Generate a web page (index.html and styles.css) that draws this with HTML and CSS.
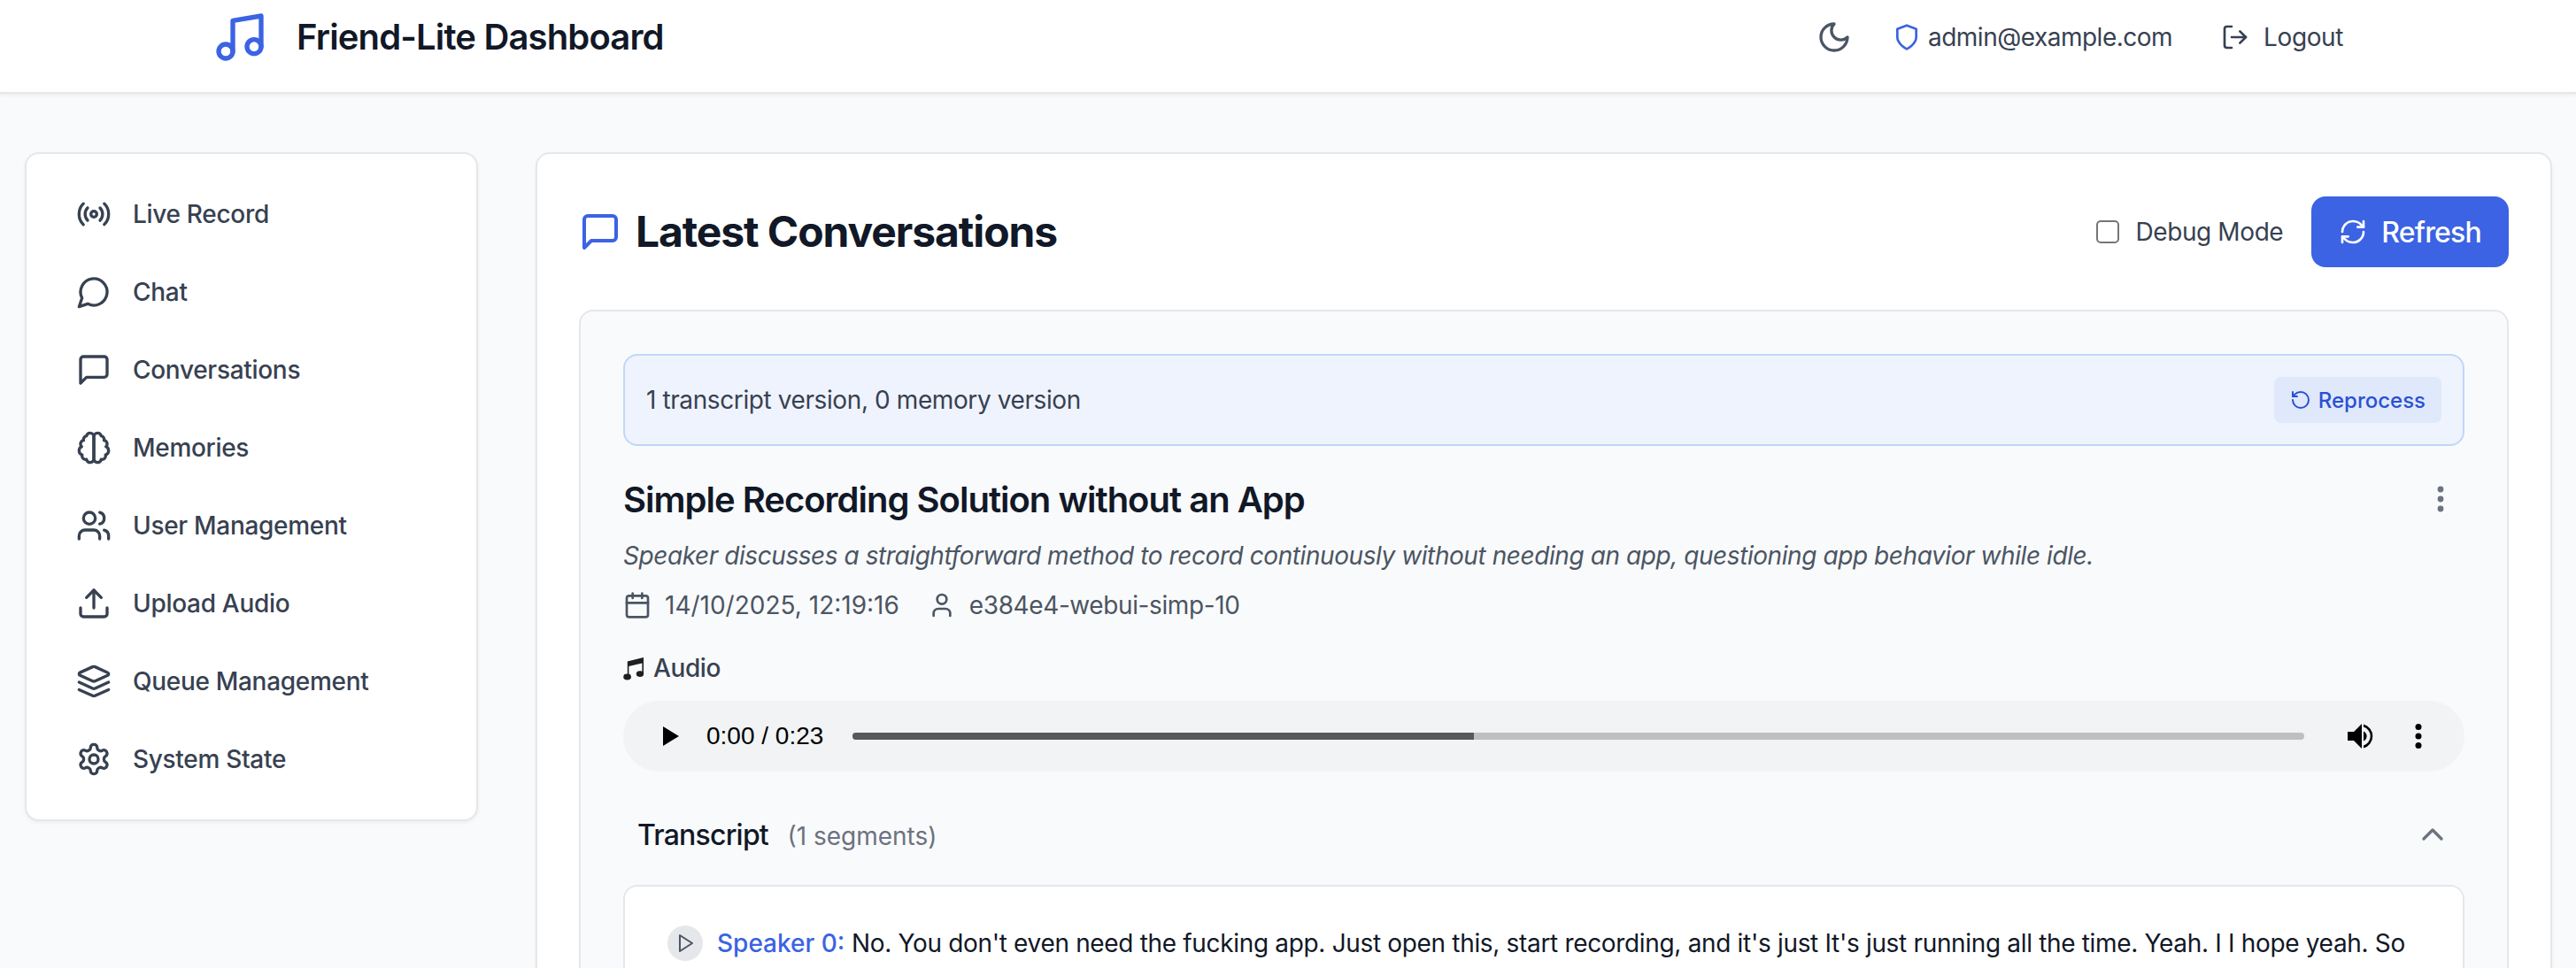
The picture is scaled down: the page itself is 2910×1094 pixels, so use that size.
FILE: index.html
```html
<!DOCTYPE html>
<html lang="en">

<head>
    <meta charset="utf-8">
    <title>Friend-Lite Dashboard</title>
    <link rel="stylesheet" href="styles.css">
</head>

<body>
    <header class="topbar">
        <div class="topbar-inner">
            <div class="brand">
                <svg class="icon icon-brand" viewBox="0 0 24 24"><path d="M9 18V5l12-2v13"/><circle cx="6" cy="18" r="3"/><circle cx="18" cy="16" r="3"/></svg>
                <span class="brand-name">Friend-Lite Dashboard</span>
            </div>
            <div class="topbar-actions">
                <svg class="icon icon-moon" viewBox="0 0 24 24"><path d="M12 3a6 6 0 0 0 9 9 9 9 0 1 1-9-9Z"/></svg>
                <div class="account">
                    <svg class="icon icon-shield" viewBox="0 0 24 24"><path d="M12 22s8-4 8-10V5l-8-3-8 3v7c0 6 8 10 8 10"/></svg>
                    <span>admin@example.com</span>
                </div>
                <div class="logout">
                    <svg class="icon icon-logout" viewBox="0 0 24 24"><path d="M9 21H5a2 2 0 0 1-2-2V5a2 2 0 0 1 2-2h4"/><polyline points="16 17 21 12 16 7"/><line x1="21" x2="9" y1="12" y2="12"/></svg>
                    <span>Logout</span>
                </div>
            </div>
        </div>
    </header>

    <div class="layout">
        <nav class="sidebar">
            <a class="nav-item">
                <svg class="icon" viewBox="0 0 24 24"><path d="M4.9 19.1C1 15.2 1 8.8 4.9 4.9"/><path d="M7.8 16.2c-2.3-2.3-2.3-6.1 0-8.5"/><circle cx="12" cy="12" r="2"/><path d="M16.2 7.8c2.3 2.3 2.3 6.1 0 8.5"/><path d="M19.1 4.9C23 8.8 23 15.1 19.1 19"/></svg>
                <span>Live Record</span>
            </a>
            <a class="nav-item">
                <svg class="icon" viewBox="0 0 24 24"><path d="M7.9 20A9 9 0 1 0 4 16.1L2 22Z"/></svg>
                <span>Chat</span>
            </a>
            <a class="nav-item">
                <svg class="icon" viewBox="0 0 24 24"><path d="M21 15a2 2 0 0 1-2 2H7l-4 4V5a2 2 0 0 1 2-2h14a2 2 0 0 1 2 2z"/></svg>
                <span>Conversations</span>
            </a>
            <a class="nav-item">
                <svg class="icon" viewBox="0 0 24 24"><path d="M9.5 2A2.5 2.5 0 0 1 12 4.5v15a2.5 2.5 0 0 1-4.96.44 2.5 2.5 0 0 1-2.96-3.08 3 3 0 0 1-.34-5.58 2.5 2.5 0 0 1 1.32-4.24 2.5 2.5 0 0 1 1.98-3A2.5 2.5 0 0 1 9.5 2Z"/><path d="M14.5 2A2.5 2.5 0 0 0 12 4.5v15a2.5 2.5 0 0 0 4.96.44 2.5 2.5 0 0 0 2.96-3.08 3 3 0 0 0 .34-5.58 2.5 2.5 0 0 0-1.32-4.24 2.5 2.5 0 0 0-1.98-3A2.5 2.5 0 0 0 14.5 2Z"/></svg>
                <span>Memories</span>
            </a>
            <a class="nav-item">
                <svg class="icon" viewBox="0 0 24 24"><path d="M16 21v-2a4 4 0 0 0-4-4H6a4 4 0 0 0-4 4v2"/><circle cx="9" cy="7" r="4"/><path d="M22 21v-2a4 4 0 0 0-3-3.87"/><path d="M16 3.13a4 4 0 0 1 0 7.75"/></svg>
                <span>User Management</span>
            </a>
            <a class="nav-item">
                <svg class="icon" viewBox="0 0 24 24"><path d="M21 15v4a2 2 0 0 1-2 2H5a2 2 0 0 1-2-2v-4"/><polyline points="17 8 12 3 7 8"/><line x1="12" x2="12" y1="3" y2="15"/></svg>
                <span>Upload Audio</span>
            </a>
            <a class="nav-item">
                <svg class="icon" viewBox="0 0 24 24"><path d="m12.83 2.18a2 2 0 0 0-1.66 0L2.6 6.08a1 1 0 0 0 0 1.83l8.58 3.91a2 2 0 0 0 1.66 0l8.58-3.9a1 1 0 0 0 0-1.83Z"/><path d="m22 17.65-9.17 4.16a2 2 0 0 1-1.66 0L2 17.65"/><path d="m22 12.65-9.17 4.16a2 2 0 0 1-1.66 0L2 12.65"/></svg>
                <span>Queue Management</span>
            </a>
            <a class="nav-item">
                <svg class="icon" viewBox="0 0 24 24"><path d="M12.22 2h-.44a2 2 0 0 0-2 2v.18a2 2 0 0 1-1 1.73l-.43.25a2 2 0 0 1-2 0l-.15-.08a2 2 0 0 0-2.73.73l-.22.38a2 2 0 0 0 .73 2.73l.15.1a2 2 0 0 1 1 1.72v.51a2 2 0 0 1-1 1.74l-.15.09a2 2 0 0 0-.73 2.73l.22.38a2 2 0 0 0 2.73.73l.15-.08a2 2 0 0 1 2 0l.43.25a2 2 0 0 1 1 1.73V20a2 2 0 0 0 2 2h.44a2 2 0 0 0 2-2v-.18a2 2 0 0 1 1-1.73l.43-.25a2 2 0 0 1 2 0l.15.08a2 2 0 0 0 2.73-.73l.22-.39a2 2 0 0 0-.73-2.73l-.15-.08a2 2 0 0 1-1-1.74v-.5a2 2 0 0 1 1-1.74l.15-.09a2 2 0 0 0 .73-2.73l-.22-.38a2 2 0 0 0-2.73-.73l-.15.08a2 2 0 0 1-2 0l-.43-.25a2 2 0 0 1-1-1.73V4a2 2 0 0 0-2-2z"/><circle cx="12" cy="12" r="3"/></svg>
                <span>System State</span>
            </a>
        </nav>

        <main class="panel">
            <div class="panel-head">
                <div class="panel-title">
                    <svg class="icon icon-title" viewBox="0 0 24 24"><path d="M21 15a2 2 0 0 1-2 2H7l-4 4V5a2 2 0 0 1 2-2h14a2 2 0 0 1 2 2z"/></svg>
                    <h1>Latest Conversations</h1>
                </div>
                <div class="panel-actions">
                    <label class="debug">
                        <span class="checkbox"></span>
                        <span>Debug Mode</span>
                    </label>
                    <button class="refresh">
                        <svg class="icon icon-refresh" viewBox="0 0 24 24"><path d="M3 12a9 9 0 0 1 9-9 9.75 9.75 0 0 1 6.74 2.74L21 8"/><path d="M21 3v5h-5"/><path d="M21 12a9 9 0 0 1-9 9 9.75 9.75 0 0 1-6.74-2.74L3 16"/><path d="M8 16H3v5"/></svg>
                        <span>Refresh</span>
                    </button>
                </div>
            </div>

            <section class="conversation">
                <div class="versions">
                    <span>1 transcript version, 0 memory version</span>
                    <button class="reprocess">
                        <svg class="icon icon-reprocess" viewBox="0 0 24 24"><path d="M3 12a9 9 0 1 0 9-9 9.75 9.75 0 0 0-6.74 2.74L3 8"/><path d="M3 3v5h5"/></svg>
                        <span>Reprocess</span>
                    </button>
                </div>

                <div class="conv-head">
                    <h2>Simple Recording Solution without an App</h2>
                    <svg class="kebab" viewBox="0 0 8 32"><circle cx="4" cy="5" r="3.4"/><circle cx="4" cy="16" r="3.4"/><circle cx="4" cy="27" r="3.4"/></svg>
                </div>
                <p class="summary">Speaker discusses a straightforward method to record continuously without needing an app, questioning app behavior while idle.</p>

                <div class="meta">
                    <svg class="icon icon-meta" viewBox="0 0 24 24"><path d="M8 2v4"/><path d="M16 2v4"/><rect width="18" height="18" x="3" y="4" rx="2"/><path d="M3 10h18"/></svg>
                    <span class="meta-date">14/10/2025, 12:19:16</span>
                    <svg class="icon icon-meta" viewBox="0 0 24 24"><path d="M19 21v-2a4 4 0 0 0-4-4H9a4 4 0 0 0-4 4v2"/><circle cx="12" cy="7" r="4"/></svg>
                    <span>e384e4-webui-simp-10</span>
                </div>

                <div class="audio-label">
                    <svg class="note" viewBox="0 0 24 28"><path d="M4.8 23V6.5L23 2v18h-1.6V8.5L6.4 12v11z"/><ellipse cx="4.6" cy="24" rx="4.4" ry="3.4"/><ellipse cx="19" cy="20.6" rx="4.2" ry="3.3"/></svg>
                    <span>Audio</span>
                </div>

                <div class="player">
                    <svg class="player-play" viewBox="0 0 18 22"><polygon points="0 0 18 11 0 22"/></svg>
                    <span class="player-time">0:00 / 0:23</span>
                    <div class="player-track"><div class="player-fill"></div></div>
                    <svg class="player-volume" viewBox="0 0 31 30"><path d="M0 10h7l9-9v28l-9-9H0z"/><path d="M18 9.5a6 6 0 0 1 0 11z"/><path d="M18 1.5a14 14 0 0 1 0 27v-3a11 11 0 0 0 0-21z"/></svg>
                    <svg class="player-more" viewBox="0 0 8 28"><circle cx="4" cy="3.5" r="3.5"/><circle cx="4" cy="14" r="3.5"/><circle cx="4" cy="24.5" r="3.5"/></svg>
                </div>

                <div class="transcript-head">
                    <div>
                        <span class="transcript-title">Transcript</span>
                        <span class="transcript-count">(1 segments)</span>
                    </div>
                    <svg class="icon icon-chevron" viewBox="0 0 24 24"><path d="m18 15-6-6-6 6"/></svg>
                </div>

                <div class="segments">
                    <div class="segment">
                        <span class="segment-play">
                            <svg class="icon icon-segment" viewBox="0 0 24 24"><polygon points="6 3 20 12 6 21 6 3"/></svg>
                        </span>
                        <p><span class="speaker">Speaker 0:</span> No. You don't even need the fucking app. Just open this, start recording, and it's just It's just running all the time. Yeah. I I hope yeah. So</p>
                    </div>
                </div>
            </section>
        </main>
    </div>
</body>

</html>
```

FILE: styles.css
```css
* {
    box-sizing: border-box;
}

html,
body {
    height: 100%;
    margin: 0;
    overflow: hidden;
}

body {
    background-color: #f9fafb;
    color: #111827;
    font-family: Inter, "Noto Sans", sans-serif;
    font-size: 28px;
    letter-spacing: -0.4px;
}

h1,
h2,
p {
    margin: 0;
}

.icon {
    width: 40px;
    height: 40px;
    flex: none;
    fill: none;
    stroke: currentColor;
    stroke-width: 2;
    stroke-linecap: round;
    stroke-linejoin: round;
}

/* top bar */
.topbar {
    height: 106px;
    background-color: #fff;
    border-bottom: 2px solid #e5e7eb;
    box-shadow: 0 2px 4px rgba(0, 0, 0, 0.05);
}

.topbar-inner {
    max-width: 2560px;
    height: 100%;
    margin: 0 auto;
    padding: 0 64px 20px;
    display: flex;
    align-items: center;
    justify-content: space-between;
}

.brand {
    display: flex;
    align-items: center;
    gap: 32px;
}

.icon-brand {
    width: 64px;
    height: 64px;
    color: #3b63e3;
}

.brand-name {
    font-size: 40px;
    font-weight: 600;
    line-height: 56px;
    letter-spacing: -0.85px;
}

.topbar-actions {
    display: flex;
    align-items: center;
    color: #374151;
}

.icon-moon {
    color: #4b5563;
    margin-right: 46px;
}

.account {
    display: flex;
    align-items: center;
    gap: 8px;
    margin-right: 55px;
    letter-spacing: -0.5px;
}

.icon-shield {
    width: 32px;
    height: 32px;
    color: #3b63e3;
}

.logout {
    display: flex;
    align-items: center;
    gap: 16px;
    padding-right: 24px;
}

.icon-logout {
    width: 32px;
    height: 32px;
}

/* page columns */
.layout {
    display: flex;
    align-items: flex-start;
    gap: 65px;
    padding: 66px 27px 0 28px;
}

.sidebar {
    width: 512px;
    flex: none;
    padding: 24px;
    background-color: #fff;
    border: 2px solid #e5e7eb;
    border-radius: 16px;
    box-shadow: 0 2px 4px rgba(0, 0, 0, 0.05);
}

.nav-item {
    height: 88px;
    padding-left: 32px;
    display: flex;
    align-items: center;
    gap: 24px;
    color: #374151;
    font-weight: 500;
    letter-spacing: -0.3px;
}

.panel {
    flex: 1;
    min-width: 0;
    padding: 48px 47px;
    background-color: #fff;
    border: 2px solid #e5e7eb;
    border-radius: 16px;
    box-shadow: 0 2px 4px rgba(0, 0, 0, 0.05);
}

.panel-head {
    display: flex;
    align-items: center;
    justify-content: space-between;
    margin-bottom: 48px;
}

.panel-title {
    display: flex;
    align-items: center;
    gap: 16px;
}

.icon-title {
    width: 48px;
    height: 48px;
    color: #3b63e3;
}

.panel-title h1 {
    font-size: 48px;
    font-weight: 700;
    line-height: 64px;
    letter-spacing: -1.1px;
}

.panel-actions {
    display: flex;
    align-items: center;
    gap: 32px;
}

.debug {
    display: flex;
    align-items: center;
    gap: 18px;
    color: #374151;
}

.checkbox {
    width: 26px;
    height: 26px;
    background-color: #fff;
    border: 2px solid #767676;
    border-radius: 5px;
}

.refresh {
    height: 80px;
    padding: 0 31px;
    display: flex;
    align-items: center;
    gap: 16px;
    background-color: #3b63e3;
    color: #fff;
    border: 0;
    border-radius: 16px;
    font-family: inherit;
    font-size: 32px;
    font-weight: 500;
    letter-spacing: -0.8px;
}

.icon-refresh {
    width: 32px;
    height: 32px;
}

/* conversation card */
.conversation {
    height: 900px;
    padding: 48px;
    background-color: #f9fafb;
    border: 2px solid #e5e7eb;
    border-radius: 16px;
}

.versions {
    height: 104px;
    padding: 0 24px;
    display: flex;
    align-items: center;
    justify-content: space-between;
    background-color: #eff3fd;
    border: 2px solid #bfd7fb;
    border-radius: 16px;
    color: #374151;
}

.reprocess {
    height: 52px;
    padding: 0 18px;
    display: flex;
    align-items: center;
    gap: 8px;
    background-color: #dfe9fb;
    color: #2b50d4;
    border: 0;
    border-radius: 8px;
    font-family: inherit;
    font-size: 24px;
    font-weight: 500;
    letter-spacing: 0;
}

.icon-reprocess {
    width: 24px;
    height: 24px;
}

.conv-head {
    height: 56px;
    margin-top: 32px;
    display: flex;
    align-items: center;
    justify-content: space-between;
}

.conv-head h2 {
    font-size: 40px;
    font-weight: 600;
    letter-spacing: -1px;
}

.kebab {
    width: 8px;
    height: 32px;
    margin-right: 23px;
    fill: #6b7280;
}

.summary {
    margin-top: 16px;
    line-height: 40px;
    color: #4b5563;
    font-style: italic;
    letter-spacing: -0.43px;
}

.meta {
    height: 40px;
    margin-top: 16px;
    display: flex;
    align-items: center;
    color: #4b5563;
}

.icon-meta {
    width: 32px;
    height: 32px;
    margin-right: 15px;
}

.meta-date {
    margin-right: 32px;
    letter-spacing: 0;
}

.audio-label {
    height: 40px;
    margin-top: 31px;
    display: flex;
    align-items: center;
    gap: 10px;
    color: #374151;
    font-weight: 500;
}

.note {
    width: 24px;
    height: 28px;
    fill: #1f1f1f;
}

.player {
    height: 80px;
    margin-top: 17px;
    padding-left: 45px;
    display: flex;
    align-items: center;
    background-color: #f1f3f4;
    border-radius: 40px;
    color: #000;
}

.player-play {
    width: 18px;
    height: 22px;
    fill: #000;
    flex: none;
}

.player-time {
    margin-left: 31px;
    font-family: "Liberation Sans", Arial, sans-serif;
    letter-spacing: 0;
}

.player-track {
    flex: 1;
    height: 8px;
    margin-left: 33px;
    background-color: #bfbfbf;
    border-radius: 4px;
    overflow: hidden;
}

.player-fill {
    width: 42.8%;
    height: 100%;
    background-color: #595959;
}

.player-volume {
    width: 31px;
    height: 30px;
    margin-left: 49px;
    flex: none;
}

.player-more {
    width: 8px;
    height: 28px;
    margin: 0 48px 0 45px;
    flex: none;
}

.transcript-head {
    height: 56px;
    margin-top: 43px;
    padding: 0 16px;
    display: flex;
    align-items: center;
    justify-content: space-between;
}

.transcript-title {
    font-size: 32px;
    font-weight: 500;
    letter-spacing: -0.8px;
}

.transcript-count {
    margin-left: 14px;
    color: #6b7280;
    letter-spacing: 0;
}

.icon-chevron {
    color: #6b7280;
}

.segments {
    height: 300px;
    margin-top: 29px;
    padding: 44px 48px;
    background-color: #fff;
    border: 2px solid #e5e7eb;
    border-radius: 16px;
}

.segment {
    display: flex;
    align-items: center;
    gap: 16px;
}

.segment-play {
    width: 40px;
    height: 40px;
    flex: none;
    display: flex;
    align-items: center;
    justify-content: center;
    background-color: #e5e7eb;
    border-radius: 50%;
    color: #4b5563;
}

.icon-segment {
    width: 24px;
    height: 24px;
}

.segment p {
    white-space: nowrap;
    line-height: 40px;
    letter-spacing: -0.33px;
}

.speaker {
    color: #3b63e3;
    font-weight: 500;
    letter-spacing: 0;
}
```
